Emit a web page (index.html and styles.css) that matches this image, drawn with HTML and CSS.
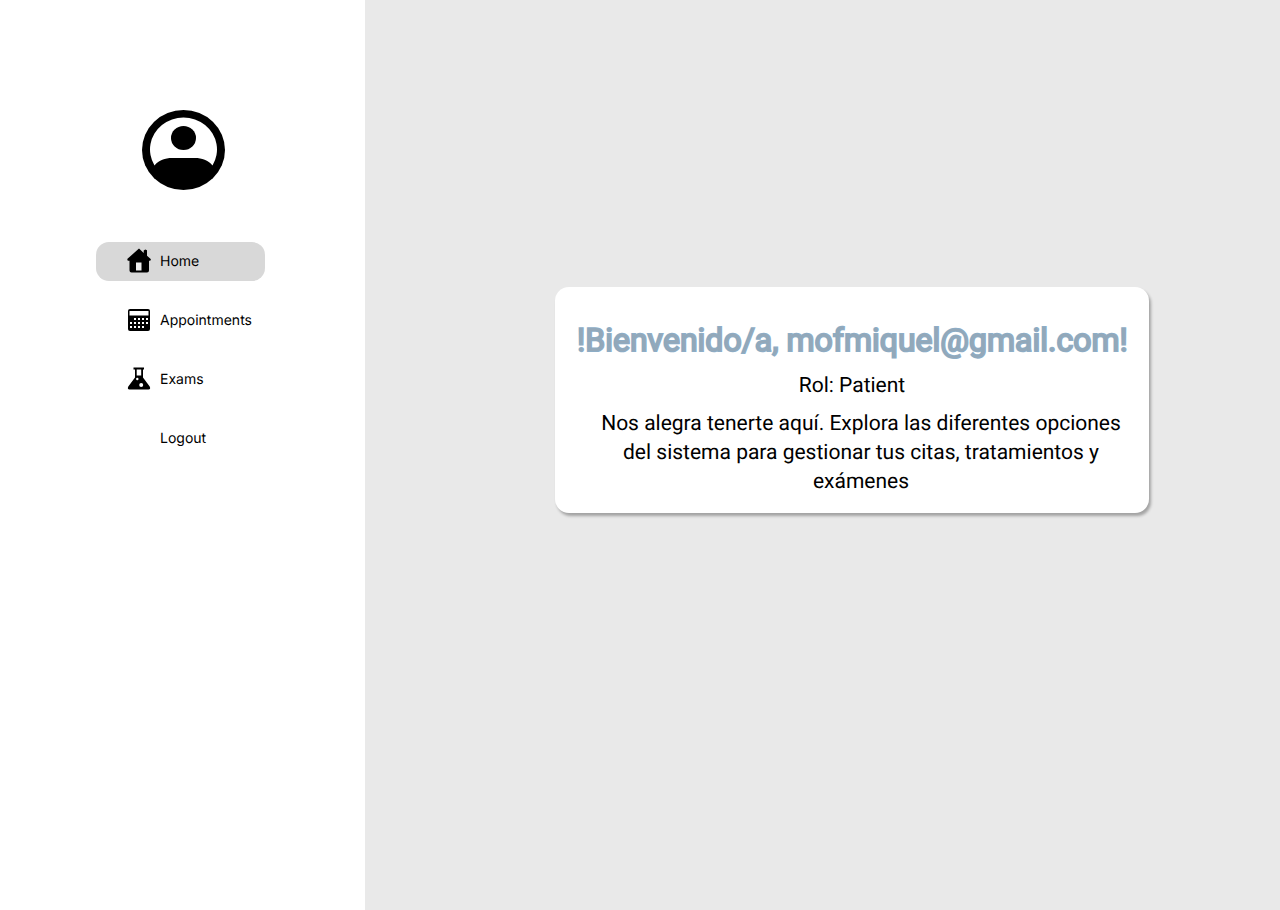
FILE: index.html
```html
<!DOCTYPE html>
<html lang="es">
<head>
<meta charset="utf-8">
<meta name="viewport" content="width=device-width, initial-scale=1">
<title>Home</title>
<link rel="stylesheet" href="styles.css">
</head>
<body>
<div class="layout">
  <aside class="sidebar">
    <svg class="avatar" viewBox="0 0 83 80" aria-hidden="true">
      <ellipse cx="41.5" cy="40" rx="41.5" ry="40"/>
      <path fill="#fff" d="M12.500 55.500A33.500 32 0 1 1 70.500 55.500C66 50 60 48 53 48H30C23 48 17 50 12.500 55.500Z"/>
      <ellipse cx="41.500" cy="28" rx="12.500" ry="12"/>
    </svg>
    <nav class="menu">
      <a class="item active" href="#home" aria-current="page">
        <svg class="icon" viewBox="0 0 24 24" aria-hidden="true">
          <path d="M12-1.500 0.500 8.800Q0 9.800 1 10.700H2.500V20.500Q2.500 22.500 4.500 22.500H20Q22 22.500 22 20.500V10.700H23.200Q24.200 9.800 23.700 9L20 5.700V0.200L18.300-0.500 16.700 0.500V2.900Z"/>
          <path fill="#eee" d="M9 12.500H14.500V20.500H9Z"/>
        </svg>
        <span>Home</span>
      </a>
      <a class="item" href="#appointments">
        <svg class="icon" viewBox="0 0 24 24" aria-hidden="true">
          <rect x="1" y="0" width="22" height="22" rx="2"/>
          <path fill="#fff" d="M2.500 2H21.500V6.500H2.500ZM7 9h2v2H7ZM11 9h2v2h-2ZM15 9h2v2h-2ZM19 9h2v2h-2ZM3 13h2v2H3ZM7 13h2v2H7ZM11 13h2v2h-2ZM15 13h2v2h-2ZM19 13h2v2h-2ZM3 17h2v2H3ZM7 17h2v2H7ZM11 17h2v2h-2ZM15 17h2v2h-2Z"/>
        </svg>
        <span>Appointments</span>
      </a>
      <a class="item" href="#exams">
        <svg class="icon" viewBox="0 0 24 24" aria-hidden="true">
          <path d="M6.500-0.500H17V1.500H16V9.500L22.700 18.500Q24 21.500 21.500 21.500H2.500Q0 21.500 1.300 18.500L8 9.500V1.500H6.500Z"/>
          <path fill="#fff" d="M9.700 1.500H14.200V7.500H9.700Z"/>
          <circle fill="#fff" cx="10.300" cy="11" r="1.200"/>
          <circle fill="#fff" cx="14.200" cy="17" r="2"/>
        </svg>
        <span>Exams</span>
      </a>
      <a class="item" href="#logout">
        <span class="icon"></span>
        <span>Logout</span>
      </a>
    </nav>
  </aside>
  <main class="content">
    <section class="card">
      <h1 class="title">!Bienvenido/a, mofmiquel@gmail.com!</h1>
      <p class="role">Rol: Patient</p>
      <p class="message">Nos alegra tenerte aquí. Explora las diferentes opciones del sistema para gestionar tus citas, tratamientos y exámenes</p>
    </section>
  </main>
</div>
</body>
</html>
```
FILE: styles.css
```css
* {
  box-sizing: border-box;
}

body {
  margin: 0;
  color: #000;
  font-family: Roboto, "Liberation Sans", sans-serif;
  text-rendering: geometricPrecision;
}

.layout {
  display: flex;
  min-height: 100vh;
}

.sidebar {
  display: flex;
  flex: 0 0 365px;
  flex-direction: column;
  padding: 110px 96px 0;
  background: #fff;
}

.avatar {
  width: 83px;
  height: 80px;
  margin-left: 46px;
  margin-bottom: 52px;
}

.menu {
  display: flex;
  flex-direction: column;
  gap: 20px;
}

.item {
  display: flex;
  align-items: center;
  gap: 9px;
  width: 169px;
  height: 39px;
  padding-left: 31px;
  border-radius: 13px;
  color: #000;
  font-family: Inter, sans-serif;
  font-size: 14px;
  line-height: 20px;
  text-decoration: none;
}

.active {
  background: #d8d8d8;
}

.icon {
  flex: none;
  width: 24px;
  height: 24px;
  overflow: visible;
}

.content {
  display: flex;
  flex: 1;
  align-items: center;
  justify-content: center;
  padding: 0 0 110px 59px;
  background: #e9e9e9;
}

.card {
  max-width: 594px;
  padding: 33px 22px 16px;
  border-radius: 14px;
  background: #fff;
  box-shadow: 2px 3px 3px rgba(0, 0, 0, 0.3);
  text-align: center;
}

.title {
  margin: 0 0 12px;
  color: #93a8b9;
  font-size: 32px;
  font-weight: 400;
  line-height: 40px;
  white-space: nowrap;
  -webkit-text-stroke: 2px #8dadc6;
  paint-order: stroke fill;
}

.role {
  margin: 0 0 10px;
  font-size: 21px;
  line-height: 28px;
}

.message {
  margin: 0;
  padding-left: 18px;
  font-size: 21px;
  line-height: 29px;
}
```
